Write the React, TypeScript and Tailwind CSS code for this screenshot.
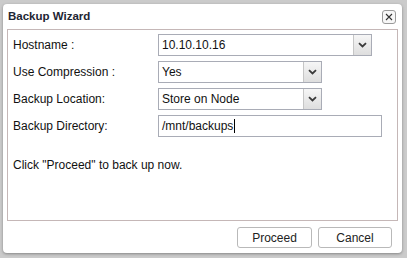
import type { ReactNode } from 'react'

const font = { fontFamily: '"Liberation Sans", Arial, sans-serif' }

function Chevron() {
  return (
    <svg width="9" height="6" viewBox="0 0 9 6" aria-hidden>
      <path d="M1 1.2 L4.5 4.5 L8 1.2" fill="none" stroke="#3a3a3a" strokeWidth="1.8" />
    </svg>
  )
}

function Select({ value, width }: { value: string; width: string }) {
  return (
    <div className={`flex h-[22px] ${width} border border-[#a9acb6] bg-white`}>
      <div className="flex flex-1 items-center px-[3px] text-[12px] text-[#111]">{value}</div>
      <div className="flex w-[18px] items-center justify-center border-l border-[#c6c6c6] bg-gradient-to-b from-[#f6f6f6] to-[#dedede]">
        <Chevron />
      </div>
    </div>
  )
}

function Row({ label, children }: { label: string; children: ReactNode }) {
  return (
    <div className="flex h-[22px] items-center">
      <div className="w-[145px] text-[12px] text-[#111]">{label}</div>
      {children}
    </div>
  )
}

export default function App() {
  return (
    <div className="h-[258px] w-[407px] overflow-hidden bg-[#cbcbcb] pl-[3px] pt-[4px]" style={font}>
      <div className="flex h-[249px] w-[399px] flex-col rounded-[4px] bg-white shadow-[0_1px_3px_rgba(0,0,0,0.35)]">
        <div className="flex h-[24px] items-center justify-between pl-[5px] pr-[6px] pt-[1px]">
          <span className="text-[11.5px] font-bold text-[#1e2633]">Backup Wizard</span>
          <button className="flex h-[14px] w-[14px] items-center justify-center rounded-[3px] border border-[#9a9a9a] bg-[#f7f7f7]">
            <svg width="8" height="8" viewBox="0 0 8 8" aria-hidden>
              <path d="M1 1 L7 7 M7 1 L1 7" stroke="#333" strokeWidth="1.1" />
            </svg>
          </button>
        </div>

        <div className="mx-[4px] mt-[1px] h-[192px] border border-[#c5b7b7] px-[5px] pt-[4px]">
          <div className="flex flex-col gap-[5px]">
            <Row label="Hostname :">
              <Select value="10.10.10.16" width="w-[214px]" />
            </Row>
            <Row label="Use Compression :">
              <Select value="Yes" width="w-[164px]" />
            </Row>
            <Row label="Backup Location:">
              <Select value="Store on Node" width="w-[164px]" />
            </Row>
            <Row label="Backup Directory:">
              <div className="flex h-[22px] w-[224px] items-center border border-[#a9acb6] bg-white px-[3px] text-[12px] text-[#111]">
                /mnt/backups
                <span className="ml-[1px] h-[14px] w-px bg-black" />
              </div>
            </Row>
          </div>
          <p className="mt-[19px] text-[12px] text-[#111]">Click "Proceed" to back up now.</p>
        </div>

        <div className="flex justify-end gap-[6px] pr-[10px] pt-[6px]">
          <button className="h-[21px] w-[75px] rounded-[3px] border border-[#b9b9b9] bg-white text-[12px] text-[#222]">
            Proceed
          </button>
          <button className="h-[21px] w-[74px] rounded-[3px] border border-[#b9b9b9] bg-white text-[12px] text-[#222]">
            Cancel
          </button>
        </div>
      </div>
    </div>
  )
}
